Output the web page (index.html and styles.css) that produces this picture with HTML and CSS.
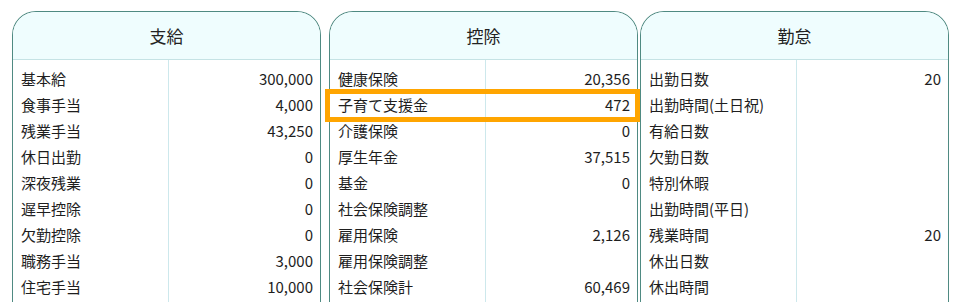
FILE: index.html
```html
<!DOCTYPE html>
<html lang="ja">
<head>
<meta charset="utf-8">
<title>明細</title>
<link rel="stylesheet" href="styles.css">
</head>
<body>
<div class="board">
  <section class="card">
    <h2 class="card-title">支給</h2>
    <div class="card-body">
      <div class="row"><span class="label">基本給</span><span class="value">300,000</span></div>
      <div class="row"><span class="label">食事手当</span><span class="value">4,000</span></div>
      <div class="row"><span class="label">残業手当</span><span class="value">43,250</span></div>
      <div class="row"><span class="label">休日出勤</span><span class="value">0</span></div>
      <div class="row"><span class="label">深夜残業</span><span class="value">0</span></div>
      <div class="row"><span class="label">遅早控除</span><span class="value">0</span></div>
      <div class="row"><span class="label">欠勤控除</span><span class="value">0</span></div>
      <div class="row"><span class="label">職務手当</span><span class="value">3,000</span></div>
      <div class="row"><span class="label">住宅手当</span><span class="value">10,000</span></div>
    </div>
  </section>
  <section class="card">
    <h2 class="card-title">控除</h2>
    <div class="card-body">
      <div class="row"><span class="label">健康保険</span><span class="value">20,356</span></div>
      <div class="row row--highlight"><span class="label">子育て支援金</span><span class="value">472</span></div>
      <div class="row"><span class="label">介護保険</span><span class="value">0</span></div>
      <div class="row"><span class="label">厚生年金</span><span class="value">37,515</span></div>
      <div class="row"><span class="label">基金</span><span class="value">0</span></div>
      <div class="row"><span class="label">社会保険調整</span><span class="value"></span></div>
      <div class="row"><span class="label">雇用保険</span><span class="value">2,126</span></div>
      <div class="row"><span class="label">雇用保険調整</span><span class="value"></span></div>
      <div class="row"><span class="label">社会保険計</span><span class="value">60,469</span></div>
    </div>
  </section>
  <section class="card card--attendance">
    <h2 class="card-title">勤怠</h2>
    <div class="card-body">
      <div class="row"><span class="label">出勤日数</span><span class="value">20</span></div>
      <div class="row"><span class="label">出勤時間(土日祝)</span><span class="value"></span></div>
      <div class="row"><span class="label">有給日数</span><span class="value"></span></div>
      <div class="row"><span class="label">欠勤日数</span><span class="value"></span></div>
      <div class="row"><span class="label">特別休暇</span><span class="value"></span></div>
      <div class="row"><span class="label">出勤時間(平日)</span><span class="value"></span></div>
      <div class="row"><span class="label">残業時間</span><span class="value">20</span></div>
      <div class="row"><span class="label">休出日数</span><span class="value"></span></div>
      <div class="row"><span class="label">休出時間</span><span class="value"></span></div>
    </div>
  </section>
</div>
</body>
</html>
```
FILE: styles.css
```css
html, body {
  margin: 0;
  padding: 0;
  background: #ffffff;
  overflow: hidden;
}

body {
  font-family: "Noto Sans CJK JP", "Noto Sans", sans-serif;
  color: #1e1e1e;
  font-size: 15px;
}

.board {
  display: flex;
  align-items: flex-start;
  gap: 8px;
  padding: 11px 0 0 12px;
}

.card {
  width: 309px;
  box-sizing: border-box;
  border: 1px solid #4f8a82;
  border-bottom: none;
  border-radius: 24px 24px 0 0;
  position: relative;
}

.card--attendance {
  margin-left: -6px;
}

.card-title {
  margin: 0;
  height: 47px;
  line-height: 47px;
  text-align: center;
  font-size: 17px;
  font-weight: normal;
  color: #222;
  background: #effdfe;
  border-radius: 23px 23px 0 0;
  border-bottom: 1px solid #c5e3e5;
}

.card-body {
  padding: 6px 0 20px;
  background: linear-gradient(#cde8ec, #cde8ec) 155px 0 / 1px 100% no-repeat;
}

.row {
  display: flex;
  height: 26px;
  line-height: 26px;
  position: relative;
}

.label {
  width: 155px;
  box-sizing: border-box;
  padding-left: 8px;
  white-space: nowrap;
}

.value {
  flex: 1;
  text-align: right;
  padding-right: 7px;
}

.row--highlight::after {
  content: "";
  position: absolute;
  left: -5px;
  right: -3px;
  top: -3px;
  bottom: -4px;
  border: 5px solid #ffa500;
  pointer-events: none;
}
```
